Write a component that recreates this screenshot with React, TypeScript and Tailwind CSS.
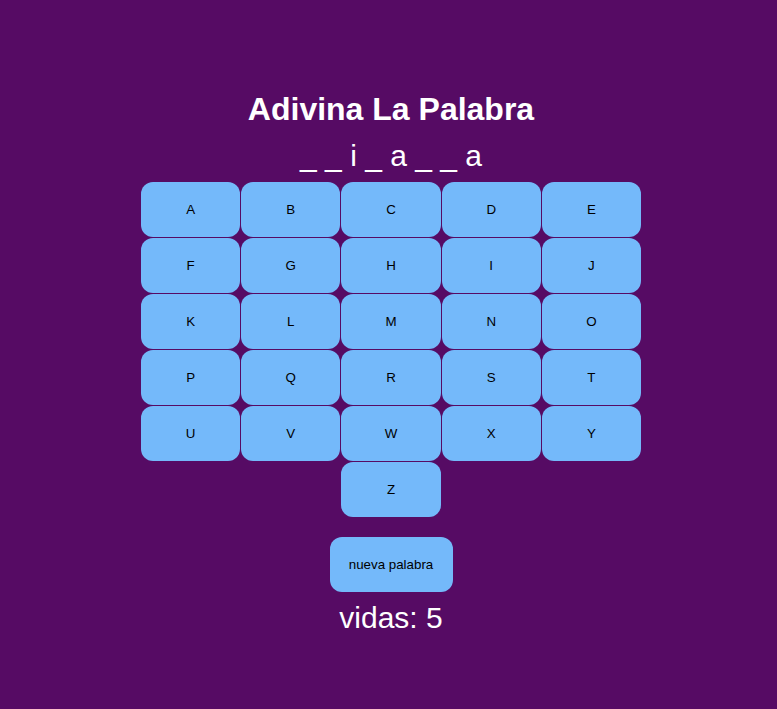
const letras = "ABCDEFGHIJKLMNOPQRSTUVWXYZ".split("");

const App = () => {
  const palabra = "_ _ i _ a _ _ a";
  const vidas = 5;
  return (
    <div className="min-h-[709px] w-full bg-[#560b64] pl-[5px] font-['Liberation_Sans',Arial,sans-serif] text-white">
      <div className="flex flex-col items-center pt-[91px]">
        <h1 className="text-[32px] font-bold leading-[37px]">Adivina La Palabra</h1>
        <div className="mt-[10px] text-[30px] leading-[35px]">{palabra}</div>
        <div className="mt-[9px] grid w-[500px] grid-cols-5 gap-[1px]">
          {letras.map((l) => (
            <button
              key={l}
              className={`h-[55px] rounded-xl bg-[#74b9fa] text-[13.33px] text-black ${l === "Z" ? "col-start-3" : ""}`}
            >
              {l}
            </button>
          ))}
        </div>
        <button className="mt-[20px] h-[55px] w-[123px] rounded-xl bg-[#74b9fa] text-[13.33px] text-black">
          nueva palabra
        </button>
        <div className="mt-[8px] text-[30px] leading-[35px]">vidas: {vidas}</div>
      </div>
    </div>
  );
};

export default App;
